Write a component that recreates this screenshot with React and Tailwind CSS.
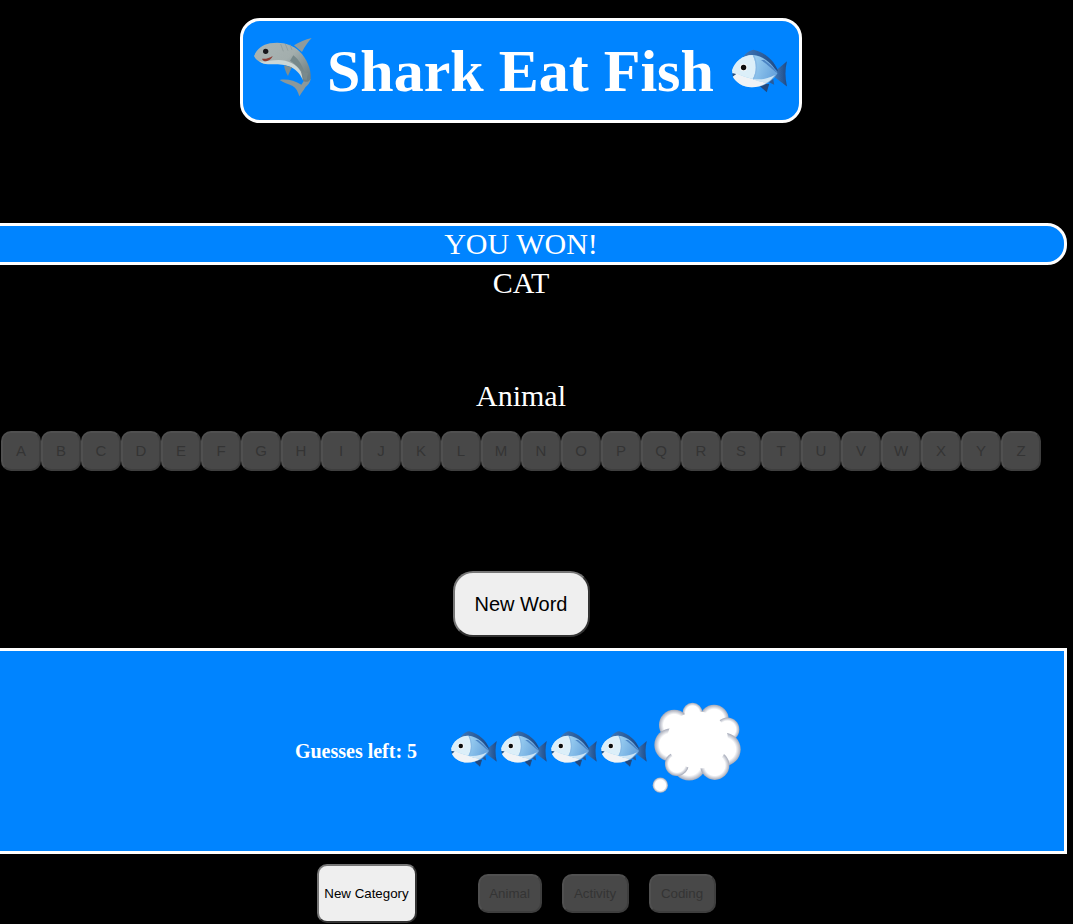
import { useId } from 'react';

const LETTERS = 'ABCDEFGHIJKLMNOPQRSTUVWXYZ'.split('');
const CATEGORIES = [
    { name: 'Animal', width: 'w-[64px]' },
    { name: 'Activity', width: 'w-[67px]' },
    { name: 'Coding', width: 'w-[67px]' },
];

// drawn by hand, no emoji font in the sandbox
function Fish({ className }) {
    const id = useId();
    return (
        <svg viewBox="0 0 133 105" className={className} aria-hidden="true">
            <defs>
                <linearGradient id={`${id}body`} x1="0" y1="0" x2="1" y2="0.3">
                    <stop offset="0.35" stopColor="#a6d8f5" />
                    <stop offset="1" stopColor="#6aa6de" />
                </linearGradient>
                <linearGradient id={`${id}fin`} x1="0" y1="0" x2="1" y2="0">
                    <stop offset="0" stopColor="#3f78b8" />
                    <stop offset="1" stopColor="#1f4a86" />
                </linearGradient>
                <filter id={`${id}soft`}>
                    <feGaussianBlur stdDeviation="0.9" />
                </filter>
            </defs>
            <g filter={`url(#${id}soft)`}>
                <path d="M102 55 L133 29 C128 48 128 68 133 90 L104 68 Z" fill={`url(#${id}fin)`} />
                <path d="M62 84 L84 104 L90 84 Z" fill="#22497f" />
                <path d="M86 78 L102 86 L99 68 Z" fill="#2a5a98" />
                <path d="M24 24 C30 12 40 3 52 1 C80 8 102 26 112 54 C90 34 60 20 24 24 Z" fill={`url(#${id}fin)`} />
                <path d="M0 52 C6 30 26 14 50 14 C78 16 100 38 110 58 C98 78 76 92 48 92 C24 92 8 78 2 66 L10 60 L1 58 Z" fill={`url(#${id}body)`} />
                <path d="M78 26 C92 36 104 48 110 58 C100 52 88 38 70 26 Z" fill="#4c84c4" />
                <path d="M2 52 C14 62 34 68 50 72 C60 76 72 80 86 80 C74 88 62 92 48 92 C24 92 8 78 2 66 L10 60 L1 58 Z" fill="#f0f3f6" />
                <path d="M50 72 C62 78 74 80 86 80 C92 76 98 70 104 62 C86 72 68 74 50 72 Z" fill="#cfe6f5" />
                <path d="M50 14 C26 14 6 30 0 52 L2 54 C14 62 34 68 50 72 C60 56 60 34 50 14 Z" fill="#dceff9" />
                <path d="M50 14 C60 34 60 56 50 72 L53 73 C63 56 63 34 54 15 Z" fill="#86b8e4" />
                <path d="M1 58 L10 60 L2 66 Z" fill="#2f4f78" />
                <circle cx="28" cy="44" r="9" fill="#f5f8fa" />
                <circle cx="28" cy="44" r="6.5" fill="#0d0d0d" />
            </g>
        </svg>
    );
}

function Shark({ className }) {
    const id = useId();
    return (
        <svg viewBox="0 0 210 198" className={className} aria-hidden="true">
            <defs>
                <linearGradient id={`${id}skin`} x1="0" y1="0" x2="1" y2="0.8">
                    <stop offset="0" stopColor="#aab5b4" />
                    <stop offset="0.55" stopColor="#a3aead" />
                    <stop offset="1" stopColor="#6f8084" />
                </linearGradient>
                <filter id={`${id}soft`}>
                    <feGaussianBlur stdDeviation="1.2" />
                </filter>
            </defs>
            <g filter={`url(#${id}soft)`}>
                {/* dorsal fin */}
                <path d="M138 34 C154 24 172 16 191 12 C180 24 170 38 162 54 Z" fill="#8f9b9c" />
                {/* tail */}
                <path d="M95 138 C116 134 140 140 160 152 L176 128 L188 136 C186 146 180 154 172 160 C166 170 160 178 154 187 C150 172 144 162 134 156 C120 150 106 146 95 138 Z" fill="#8a989b" />
                {/* body */}
                <path d="M18 66 C26 46 44 32 66 28 C100 22 132 30 154 52 C176 74 190 104 188 134 C182 146 170 146 164 138 C160 118 146 102 120 94 C98 88 80 90 62 90 C42 90 24 80 18 66 Z" fill={`url(#${id}skin)`} />
                {/* belly */}
                <path d="M34 82 C50 84 70 78 92 78 C118 78 146 90 158 112 C161 120 163 130 164 138 C156 118 142 104 120 96 C98 90 80 92 60 91 C50 90 40 88 34 82 Z" fill="#cbd7d6" />
                {/* side shade */}
                <path d="M136 64 C152 76 166 98 172 124 C158 108 146 92 126 80 Z" fill="#76888a" />
                {/* fins */}
                <path d="M108 94 C116 96 124 98 132 100 C128 108 124 116 120 126 C114 116 110 106 108 94 Z" fill="#7f8e90" />
                <path d="M164 112 L180 118 L176 138 L166 136 Z" fill="#7a8a8c" />
                {/* gills */}
                <path d="M98 30 L106 52 M112 30 L120 50 M126 32 L132 48" stroke="#8f9c9c" strokeWidth="2.5" fill="none" />
                {/* mouth */}
                <path d="M42 74 C52 76 64 72 74 66 C70 76 60 82 50 82 C46 80 44 78 42 74 Z" fill="#8d3b32" />
                <circle cx="53" cy="52" r="8" fill="#15171a" />
            </g>
        </svg>
    );
}

function ThoughtCloud({ className }) {
    const id = useId();
    const puffs = [
        [755, 68, 30], [820, 88, 44], [700, 105, 46], [860, 118, 36],
        [690, 165, 50], [850, 178, 50], [745, 220, 52], [822, 226, 44], [708, 222, 36],
    ];
    return (
        <svg viewBox="630 30 280 285" className={className} aria-hidden="true">
            <defs>
                <radialGradient id={`${id}puff`}>
                    <stop offset="0.7" stopColor="#ffffff" />
                    <stop offset="1" stopColor="#a4a9b8" />
                </radialGradient>
                <filter id={`${id}soft`}>
                    <feGaussianBlur stdDeviation="1.5" />
                </filter>
            </defs>
            <g filter={`url(#${id}soft)`}>
                {puffs.map(([cx, cy, r]) => (
                    <circle key={`${cx}-${cy}`} cx={cx} cy={cy} r={r} fill={`url(#${id}puff)`} />
                ))}
                <ellipse cx="770" cy="150" rx="92" ry="86" fill="#ffffff" />
                <circle cx="658" cy="286" r="23" fill={`url(#${id}puff)`} />
            </g>
        </svg>
    );
}

function App() {
    return (
        <div className="min-h-screen bg-black">
            <div className="w-[1042px] h-[924px] flex flex-col items-center text-white font-['Liberation_Serif',serif]">
                {/* Title */}
                <div className="mt-[18px] w-[562px] h-[105px] shrink-0 flex items-center bg-[#0084ff] border-[3px] border-white rounded-[20px]">
                    <Shark className="ml-[5px] mt-[-7px] w-[70px] h-[66px] shrink-0" />
                    <h1 className="ml-[9px] text-[60px] leading-none font-bold whitespace-nowrap">Shark Eat Fish</h1>
                    <Fish className="ml-[18px] w-[55px] h-[44px] shrink-0" />
                </div>

                {/* Result */}
                <div className="mt-[100px] -mx-[25px] w-[1092px] h-[42px] shrink-0 flex items-center justify-center bg-[#0084ff] border-[3px] border-white rounded-[20px] text-[30px] leading-none">
                    YOU WON!
                </div>
                <div className="h-[36px] shrink-0 text-[30px] leading-[36px]">CAT</div>

                <div className="mt-[77px] h-[36px] shrink-0 text-[30px] leading-[36px]">Animal</div>

                {/* Keyboard */}
                <div className="mt-[17px] w-[1042px] flex justify-center shrink-0 font-['Liberation_Sans',sans-serif]">
                    {LETTERS.map((letter) => (
                        <button
                            key={letter}
                            disabled
                            className="w-[40px] h-[40px] shrink-0 bg-[#484848] border-2 border-[#505050] border-r-[#3e3e3e] border-b-[#3e3e3e] rounded-[10px] text-[15px] text-[#343434]"
                        >
                            {letter}
                        </button>
                    ))}
                </div>

                <button className="mt-[100px] w-[137px] h-[66px] shrink-0 bg-[#efefef] border-2 border-[#767676] border-r-[#333] border-b-[#333] rounded-[20px] text-[20px] text-black font-['Liberation_Sans',sans-serif]">
                    New Word
                </button>

                {/* Guesses */}
                <div className="mt-[11px] -mx-[25px] w-[1092px] h-[206px] pr-[3px] shrink-0 flex items-center justify-center bg-[#0084ff] border-[3px] border-white">
                    <span className="text-[20px] font-bold whitespace-nowrap mr-[34px]">Guesses left: 5</span>
                    <div className="flex items-center">
                        <Fish className="w-[46px] h-[36px] mr-[4px] mt-[-4px]" />
                        <Fish className="w-[46px] h-[36px] mr-[4px] mt-[-4px]" />
                        <Fish className="w-[46px] h-[36px] mr-[4px] mt-[-4px]" />
                        <Fish className="w-[46px] h-[36px] mr-[4px] mt-[-4px]" />
                        <ThoughtCloud className="w-[93px] h-[95px] mt-[-8px]" />
                    </div>
                </div>

                {/* Categories */}
                <div className="mt-[10px] mr-[10px] flex items-center font-['Liberation_Sans',sans-serif] text-[13.33px]">
                    <button className="w-[100px] h-[59px] bg-[#efefef] border-2 border-[#767676] border-r-[#333] border-b-[#333] rounded-[10px] text-black mr-[61px]">
                        New Category
                    </button>
                    <div className="flex gap-[20px]">
                        {CATEGORIES.map((c) => (
                            <button
                                key={c.name}
                                disabled
                                className={`${c.width} h-[39px] bg-[#484848] border-2 border-[#505050] border-r-[#3e3e3e] border-b-[#3e3e3e] rounded-[10px] text-[#343434]`}
                            >
                                {c.name}
                            </button>
                        ))}
                    </div>
                </div>
            </div>
        </div>
    );
}

export default App;
